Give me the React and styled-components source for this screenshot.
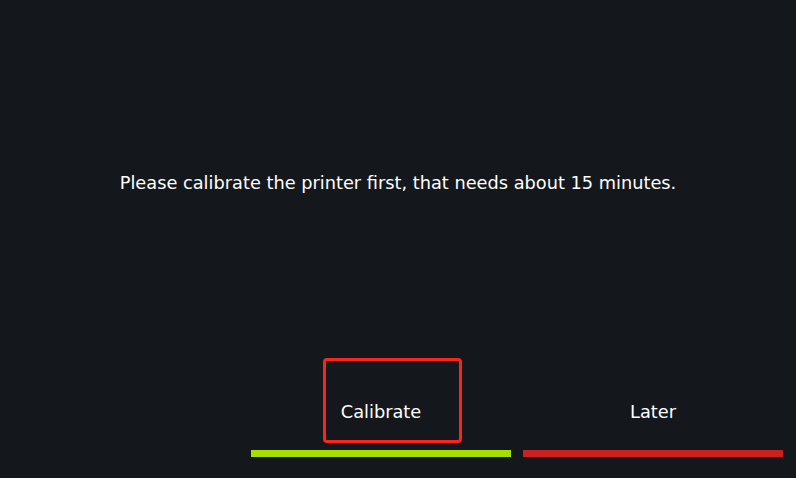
import React from "react"
import styled, { createGlobalStyle } from "styled-components"

const GlobalStyle = createGlobalStyle`
  html, body {
    margin: 0;
    padding: 0;
    background: #14181c;
  }
  body {
    font-family: "DejaVu Sans", "Liberation Sans", sans-serif;
  }
`

const Screen = styled.div`
  width: 796px;
  height: 478px;
  display: flex;
  flex-direction: column;
  background: #14181c;
  color: #ffffff;
  overflow: hidden;
`

const MessageArea = styled.div`
  flex: 1;
  display: flex;
  align-items: center;
  justify-content: center;
  padding-top: 8px;
`

const Message = styled.p`
  margin: 0;
  font-size: 17.75px;
  line-height: 20px;
  text-align: center;
`

const ButtonRow = styled.div`
  display: flex;
  justify-content: flex-end;
  gap: 12px;
  padding: 0 13px 21px 0;
`

const Button = styled.div`
  position: relative;
  width: 260px;
  display: flex;
  flex-direction: column;
  align-items: center;
  cursor: pointer;
`

const Label = styled.span`
  margin-top: 44px;
  font-size: 17.75px;
  line-height: 20px;
`

const Bar = styled.div`
  align-self: stretch;
  height: 7px;
  margin-top: 28px;
  background: ${(p) => p.$color};
`

const FocusRing = styled.div`
  position: absolute;
  left: 72px;
  top: 0;
  width: 139px;
  height: 85px;
  box-sizing: border-box;
  border: 3px solid #ff2418;
  border-radius: 4px;
  pointer-events: none;
`

const App = () => {
  return (
    <>
      <GlobalStyle />
      <Screen>
        <MessageArea>
          <Message>
            Please calibrate the printer first, that needs about 15 minutes.
          </Message>
        </MessageArea>
        <ButtonRow>
          <Button>
            <FocusRing />
            <Label>Calibrate</Label>
            <Bar $color="#a6de00" />
          </Button>
          <Button>
            <Label>Later</Label>
            <Bar $color="#cc1f1f" />
          </Button>
        </ButtonRow>
      </Screen>
    </>
  )
}

export default App
